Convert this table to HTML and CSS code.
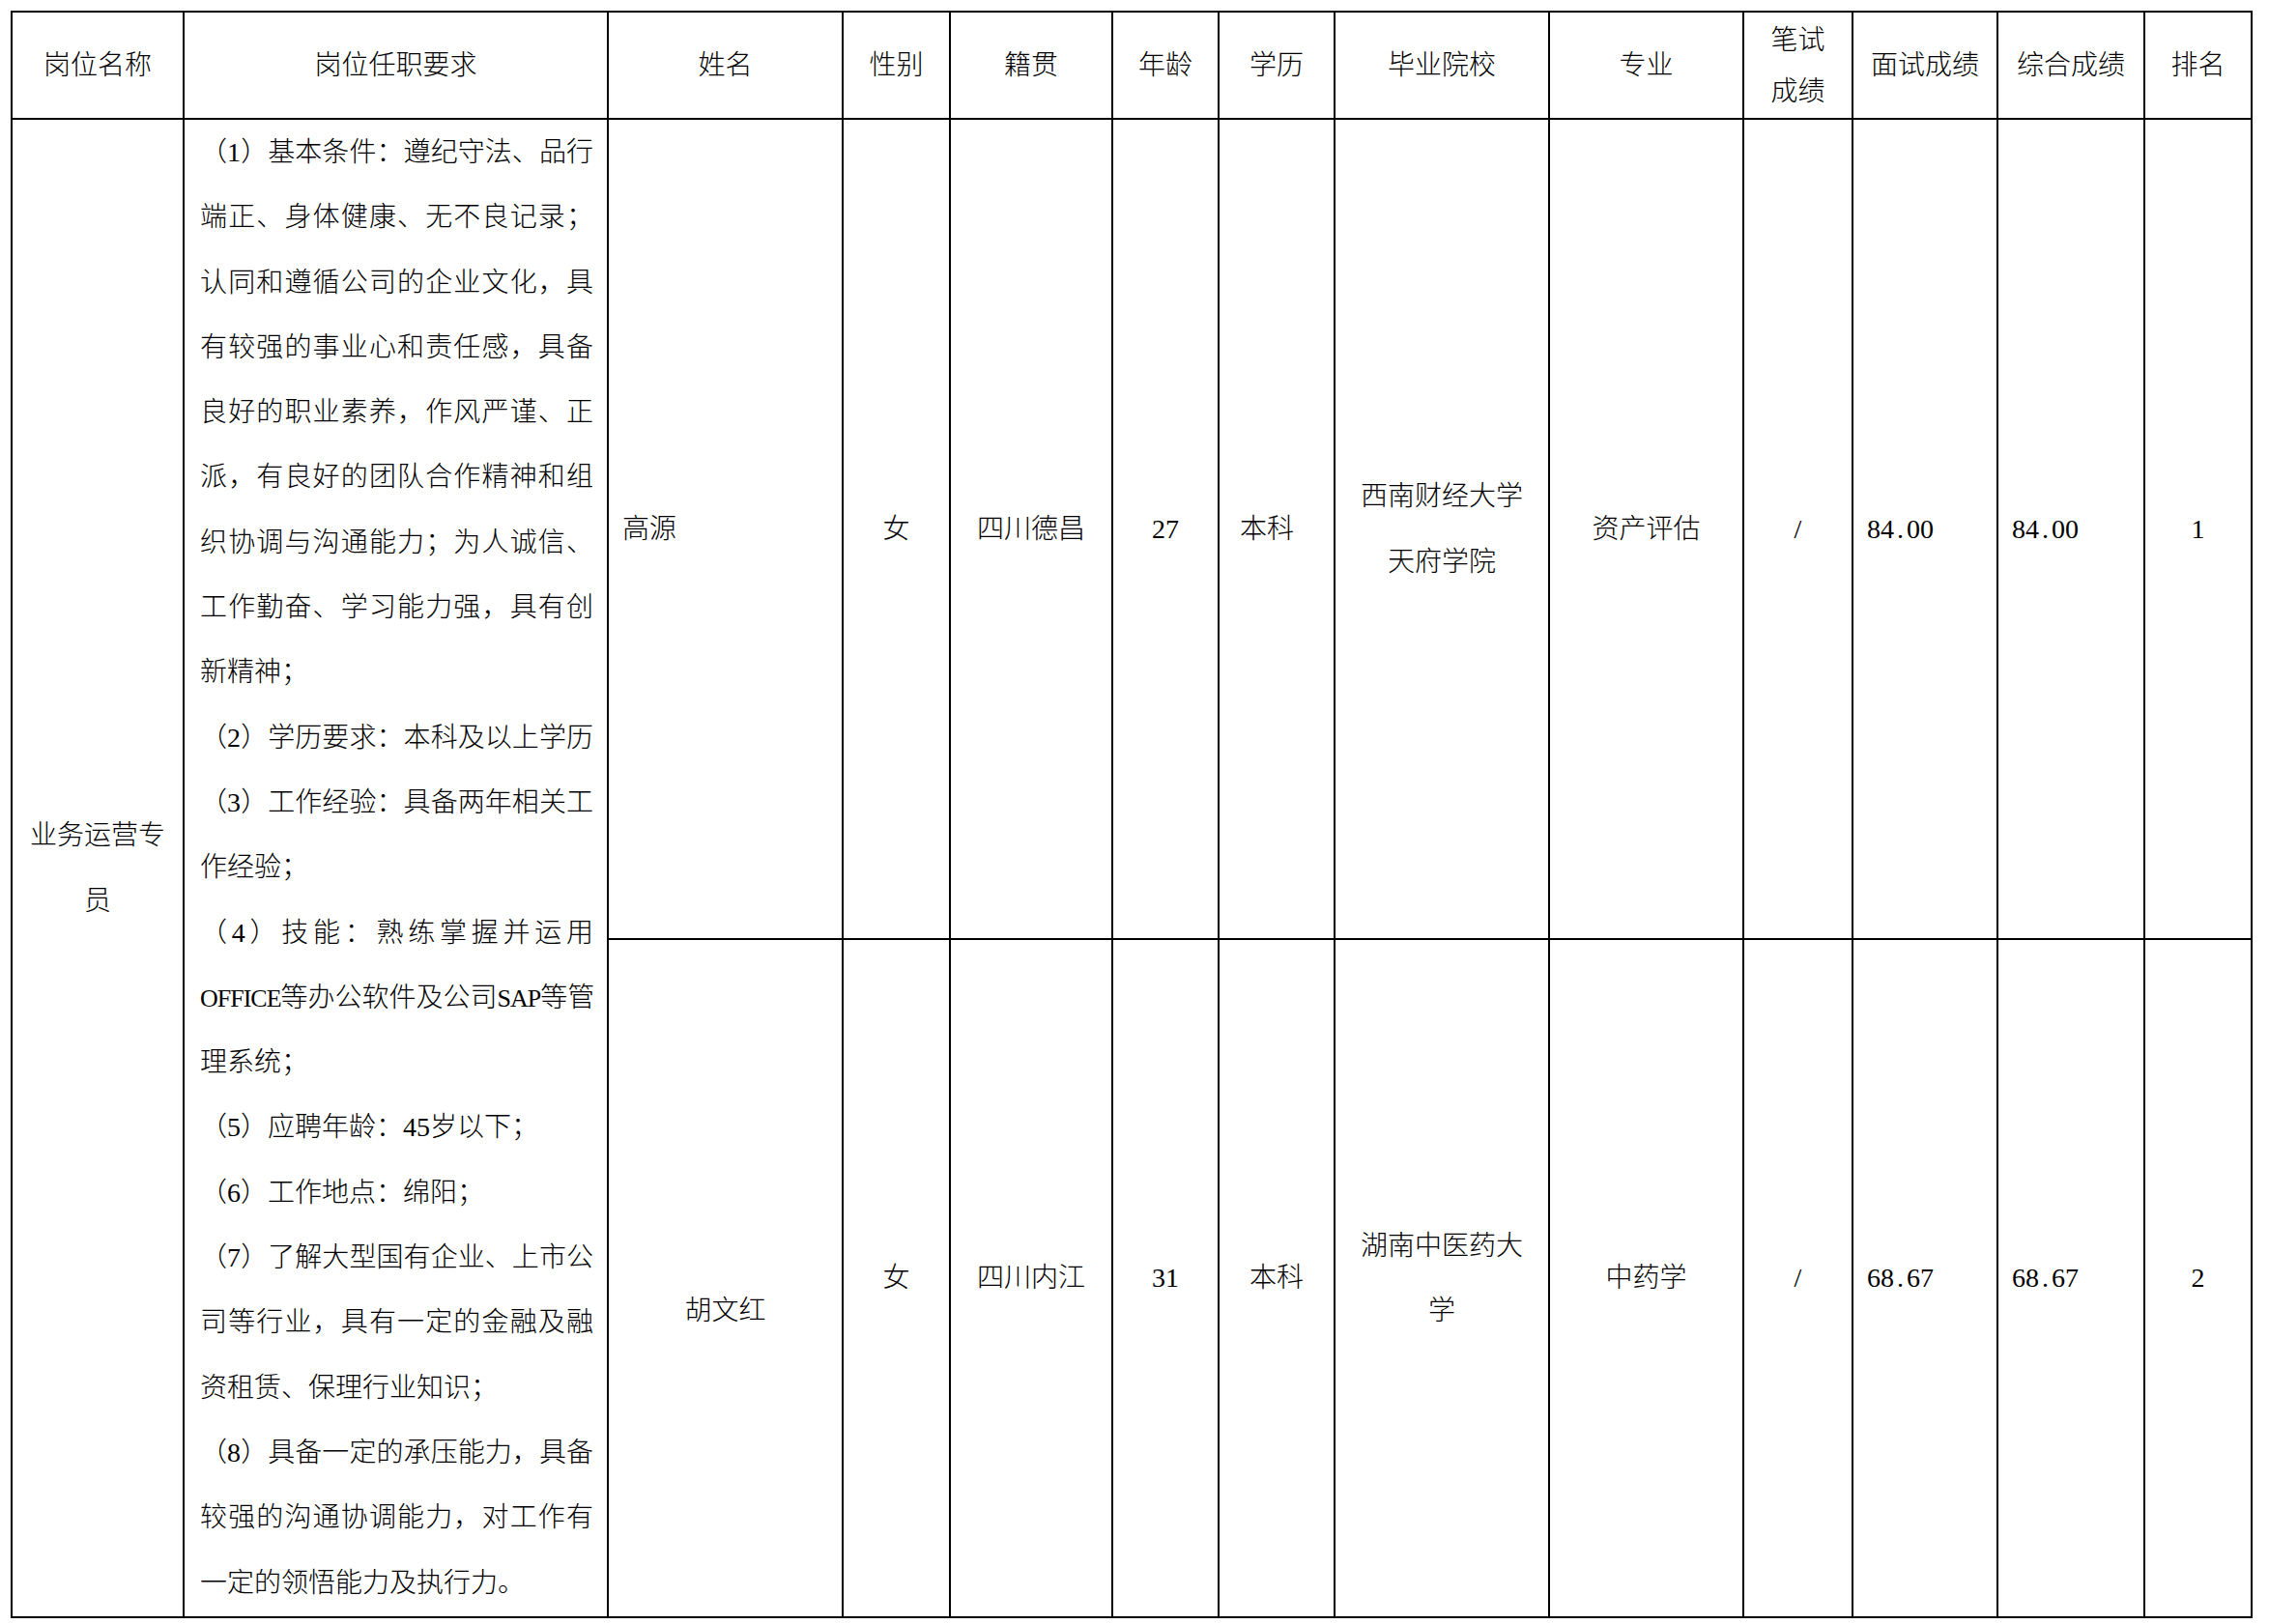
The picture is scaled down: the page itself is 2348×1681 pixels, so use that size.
FILE: index.html
```
<!DOCTYPE html>
<html lang="zh-CN">
<head>
<meta charset="utf-8">
<title>岗位拟录用人员名单</title>
<link rel="stylesheet" href="styles.css">
</head>
<body>
<table class="grid">
  <colgroup>
    <col class="w-post">
    <col class="w-req">
    <col class="w-name">
    <col class="w-sex">
    <col class="w-home">
    <col class="w-age">
    <col class="w-edu">
    <col class="w-school">
    <col class="w-major">
    <col class="w-written">
    <col class="w-inter">
    <col class="w-total">
    <col class="w-rank">
  </colgroup>
  <thead>
    <tr class="hd">
      <th>岗位名称</th>
      <th>岗位任职要求</th>
      <th>姓名</th>
      <th>性别</th>
      <th>籍贯</th>
      <th>年龄</th>
      <th>学历</th>
      <th>毕业院校</th>
      <th>专业</th>
      <th class="two">笔试<br>成绩</th>
      <th>面试成绩</th>
      <th>综合成绩</th>
      <th>排名</th>
    </tr>
  </thead>
  <tbody>
    <tr class="r1">
      <td rowspan="2" class="post">业务运营专<br>员</td>
      <td rowspan="2" class="req">
        <div class="ln j">（1）基本条件：遵纪守法、品行</div>
        <div class="ln j">端正、身体健康、无不良记录；</div>
        <div class="ln j">认同和遵循公司的企业文化，具</div>
        <div class="ln j">有较强的事业心和责任感，具备</div>
        <div class="ln j">良好的职业素养，作风严谨、正</div>
        <div class="ln j">派，有良好的团队合作精神和组</div>
        <div class="ln j">织协调与沟通能力；为人诚信、</div>
        <div class="ln j">工作勤奋、学习能力强，具有创</div>
        <div class="ln">新精神；</div>
        <div class="ln j">（2）学历要求：本科及以上学历</div>
        <div class="ln j">（3）工作经验：具备两年相关工</div>
        <div class="ln">作经验；</div>
        <div class="ln j">（4）技能：熟练掌握并运用</div>
        <div class="ln j"><span class="lat">OFFICE</span>等办公软件及公司<span class="lat">SAP</span>等管</div>
        <div class="ln">理系统；</div>
        <div class="ln">（5）应聘年龄：45岁以下；</div>
        <div class="ln">（6）工作地点：绵阳；</div>
        <div class="ln j">（7）了解大型国有企业、上市公</div>
        <div class="ln j">司等行业，具有一定的金融及融</div>
        <div class="ln">资租赁、保理行业知识；</div>
        <div class="ln j">（8）具备一定的承压能力，具备</div>
        <div class="ln j">较强的沟通协调能力，对工作有</div>
        <div class="ln">一定的领悟能力及执行力。</div>
      </td>
      <td class="left">高源</td>
      <td>女</td>
      <td>四川德昌</td>
      <td>27</td>
      <td class="shift">本科</td>
      <td>西南财经大学<br>天府学院</td>
      <td>资产评估</td>
      <td>/</td>
      <td class="left">84<span class="dot">.</span>00</td>
      <td class="left">84<span class="dot">.</span>00</td>
      <td>1</td>
    </tr>
    <tr class="r2">
      <td><br>胡文红</td>
      <td>女</td>
      <td>四川内江</td>
      <td>31</td>
      <td>本科</td>
      <td>湖南中医药大<br>学</td>
      <td>中药学</td>
      <td>/</td>
      <td class="left">68<span class="dot">.</span>67</td>
      <td class="left">68<span class="dot">.</span>67</td>
      <td>2</td>
    </tr>
  </tbody>
</table>
</body>
</html>
```
FILE: styles.css
```
html, body {
  margin: 0;
  padding: 0;
  background: #ffffff;
}

body {
  font-family: "Liberation Serif", "Noto Sans CJK SC", serif;
  font-size: 28px;
  font-weight: 300;
  color: #000000;
}

.grid {
  border-collapse: collapse;
  table-layout: fixed;
  width: 2320px;
  margin: 11px 0 0 11px;
}

.w-post { width: 178px; }
.w-req { width: 439px; }
.w-name { width: 243px; }
.w-sex { width: 111px; }
.w-home { width: 168px; }
.w-age { width: 110px; }
.w-edu { width: 120px; }
.w-school { width: 222px; }
.w-major { width: 201px; }
.w-written { width: 113px; }
.w-inter { width: 150px; }
.w-total { width: 152px; }
.w-rank { width: 111px; }

.grid th,
.grid td {
  border: 2px solid #000000;
  padding: 0 8px;
  text-align: center;
  vertical-align: middle;
  font-weight: 300;
  line-height: 67.3px;
  white-space: nowrap;
}

.hd {
  height: 111px;
}

.hd th {
  line-height: 53px;
}

.r1 {
  height: 849px;
}

.r2 {
  height: 702px;
}

.grid td.req {
  padding: 0 14px 0 16px;
  text-align: left;
  vertical-align: top;
}

.ln {
  height: 67.3px;
  line-height: 67.3px;
  white-space: nowrap;
  text-align: left;
}

.ln.j {
  text-align: justify;
  text-align-last: justify;
}

.lat {
  font-size: 26px;
  letter-spacing: -1px;
}

.dot {
  padding: 0 3px;
}

.grid td.left {
  text-align: left;
  padding-left: 14px;
}

.grid td.shift {
  padding-right: 28px;
}
```
